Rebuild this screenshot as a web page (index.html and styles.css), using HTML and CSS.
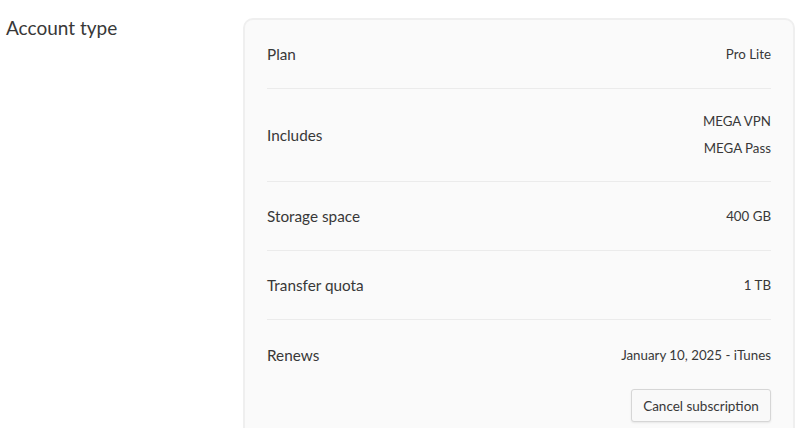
FILE: index.html
```html
<!DOCTYPE html>
<html>
<head>
<meta charset="utf-8">
<link rel="stylesheet" href="styles.css">
</head>
<body>
<div class="page">
  <h2 class="title">Account type</h2>
  <div class="card">
    <div class="row">
      <div class="label">Plan</div>
      <div class="value">Pro Lite</div>
    </div>
    <div class="row row-tall">
      <div class="label">Includes</div>
      <div class="value value-list">
        <div>MEGA VPN</div>
        <div>MEGA Pass</div>
      </div>
    </div>
    <div class="row">
      <div class="label">Storage space</div>
      <div class="value">400 GB</div>
    </div>
    <div class="row">
      <div class="label">Transfer quota</div>
      <div class="value">1 TB</div>
    </div>
    <div class="row row-last">
      <div class="label">Renews</div>
      <div class="value">January 10, 2025 - iTunes</div>
    </div>
    <div class="actions">
      <button class="btn">Cancel subscription</button>
    </div>
  </div>
</div>
</body>
</html>
```
FILE: styles.css
```css
html, body {
  margin: 0;
  padding: 0;
  background: #ffffff;
}
body {
  font-family: Lato, "Open Sans", sans-serif;
  color: #333333;
  overflow: hidden;
  height: 428px;
}
.page {
  display: flex;
  align-items: flex-start;
  padding: 17px 5px 0 6px;
}
.title {
  margin: 0;
  width: 237px;
  font-size: 19px;
  font-weight: 400;
  line-height: 22px;
  color: #383838;
  flex: none;
}
.card {
  flex: 1;
  margin-top: 1px;
  background: #fafafa;
  border: 2px solid #efefef;
  border-bottom: none;
  border-radius: 10px 10px 0 0;
  padding: 0 22px 0 22px;
  height: 420px;
  box-sizing: border-box;
}
.row {
  display: flex;
  justify-content: space-between;
  align-items: center;
  height: 68px;
  border-bottom: 1px solid #ebebeb;
}
.row-tall {
  height: 92px;
}
.row-last {
  border-bottom: none;
  height: 69px;
}
.label {
  font-size: 15.3px;
  color: #383838;
}
.value {
  font-size: 13.3px;
  color: #383838;
  text-align: right;
}
.value-list div {
  line-height: 27px;
}
.actions {
  display: flex;
  justify-content: flex-end;
}
.btn {
  font-family: Lato, "Open Sans", sans-serif;
  font-size: 13.5px;
  color: #383838;
  background: #f9f9f9;
  border: 1px solid #d6d6d6;
  border-radius: 3px;
  height: 33px;
  width: 140px;
  padding: 0;
  box-shadow: 0 1px 2px rgba(0,0,0,0.08);
}
```
